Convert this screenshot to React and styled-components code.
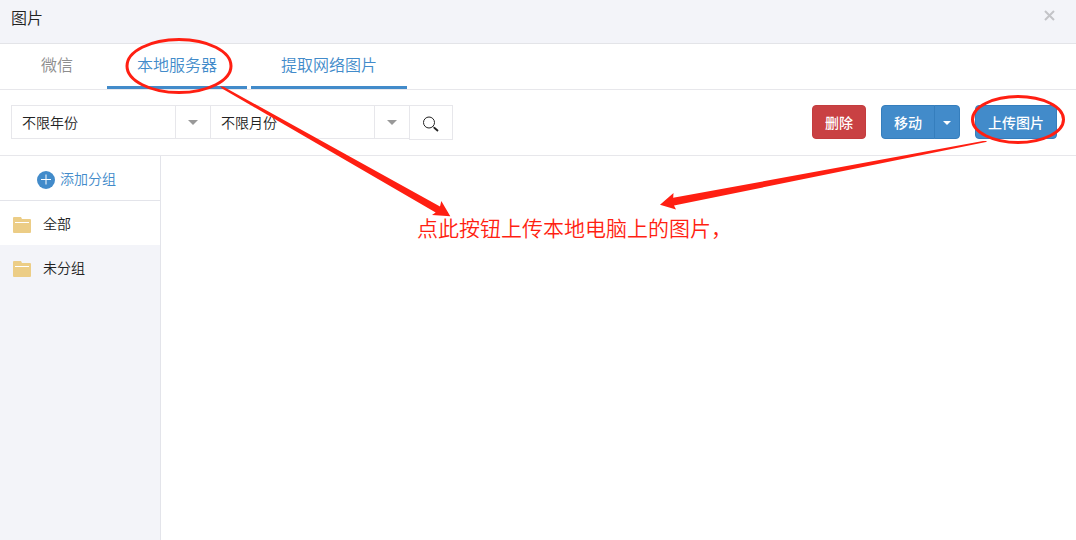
import React from 'react'
import styled, { createGlobalStyle } from 'styled-components'

const groups = [
    { id: 'all', name: '全部', active: true },
    { id: 'none', name: '未分组', active: false },
]

const tabs = [
    { name: '微信', active: false },
    { name: '本地服务器', active: true },
    { name: '提取网络图片', active: true },
]

function Filter({ label, options }) {
    return (
        <SelectBox>
            <select aria-label={label}>
                {options.map((o) => <option key={o}>{o}</option>)}
            </select>
            <span>
                <svg width="10" height="5" viewBox="0 0 10 5"><path d="M0 0h10L5 5z" fill="#999" /></svg>
            </span>
        </SelectBox>
    )
}

function Folder() {
    return (
        <svg width="18" height="16" viewBox="0 0 18 16">
            <path d="M0 1q0-1 1-1h7l1 2h8q1 0 1 1v12q0 1-1 1H1q-1 0-1-1z" fill="#eccd86" />
            <path d="M2 5.5h14" stroke="#fff" strokeWidth="1" />
        </svg>
    )
}

function Notes() {
    return (
        <Overlay>
            <svg width="1076" height="240" viewBox="0 0 1076 240" fill="none">
                <ellipse cx="179" cy="66" rx="52" ry="26.5" stroke="#ff1f12" strokeWidth="3" />
                <ellipse cx="1018" cy="119.5" rx="45.5" ry="23" stroke="#ff1f12" strokeWidth="3" />
                <path d="M220 86L224 87L440 206.5L441.3 201L450.3 216.3L432 215L435.7 212.5L222 88.5z" fill="#ff1f12" />
                <path d="M987 141L986 142L674 205.5L676 209.5L660 204.7L673.5 193L673.2 197.8L983 141z" fill="#ff1f12" />
            </svg>
            <p>点此按钮上传本地电脑上的图片，</p>
        </Overlay>
    )
}

function App() {
    return (
        <Page>
            <GlobalStyle />
            <Header>
                <h1>图片</h1>
                <button type="button" aria-label="关闭">
                    <svg width="11" height="11" viewBox="0 0 11 11"><path d="M1 1l9 9M10 1l-9 9" stroke="#c3c4c8" strokeWidth="2" /></svg>
                </button>
            </Header>
            <Tabs>
                {tabs.map((t) => <Tab key={t.name} href="#" $active={t.active}>{t.name}</Tab>)}
            </Tabs>
            <Toolbar>
                <Filters>
                    <Filter label="年份" options={['不限年份']} />
                    <Filter label="月份" options={['不限月份']} />
                    <Search type="button" aria-label="搜索">
                        <svg width="16" height="16" viewBox="0 0 16 16" fill="none" stroke="#222">
                            <circle cx="6" cy="6.5" r="5.5" />
                            <path d="M10 10.5l1.5 1.5" />
                            <path d="M11 11.5l4 3.5" strokeWidth="1.8" />
                        </svg>
                    </Search>
                </Filters>
                <Actions>
                    <Button type="button" $danger>删除</Button>
                    <Split>
                        <Button type="button">移动</Button>
                        <Button type="button" aria-label="更多">
                            <svg width="8" height="4" viewBox="0 0 8 4"><path d="M0 0h8L4 4z" fill="#fff" /></svg>
                        </Button>
                    </Split>
                    <Button type="button">上传图片</Button>
                </Actions>
            </Toolbar>
            <Body>
                <Sidebar>
                    <AddGroup type="button">
                        <svg width="18" height="18" viewBox="0 0 18 18">
                            <circle cx="9" cy="9" r="9" fill="#428bca" />
                            <path d="M4 8.5h10M9 3.5v10" stroke="#fff" />
                        </svg>
                        添加分组
                    </AddGroup>
                    {groups.map((g) => (
                        <Group key={g.id} href="#" $active={g.active}>
                            <Folder />
                            {g.name}
                        </Group>
                    ))}
                </Sidebar>
                <Content />
            </Body>
            <Notes />
        </Page>
    )
}

const GlobalStyle = createGlobalStyle`
* {
    box-sizing: border-box;
}
body {
    margin: 0;
    color: #222;
    background: #fff;
    font: 350 14px/20px "Noto Sans CJK SC", sans-serif;
}
button, select {
    font: inherit;
    color: inherit;
    margin: 0;
    cursor: pointer;
}
a {
    text-decoration: none;
}
svg {
    display: block;
    flex: none;
}
`
const Page = styled.div`
    position: relative;
    display: flex;
    flex-direction: column;
    min-height: 100vh;
    overflow: hidden;
`
const Header = styled.header`
    display: flex;
    justify-content: space-between;
    align-items: flex-start;
    padding: 7px 21px 16px 11px;
    background: #f3f4f9;
    border-bottom: 1px solid #e3e4e8;
    h1 {
        margin: 0;
        font-size: 16px;
        font-weight: 350;
        line-height: 20px;
    }
    button {
        padding: 3px 0 0;
        border: 0;
        background: none;
    }
`
const Tabs = styled.nav`
    display: flex;
    gap: 4px;
    padding: 0 11px;
    border-bottom: 1px solid #e7e7eb;
`
const Tab = styled.a`
    padding: 10px 30px 12px;
    font-size: 16px;
    line-height: 20px;
    color: ${(p) => (p.$active ? '#428bca' : '#8d8d8d')};
    border-bottom: 3px solid ${(p) => (p.$active ? '#428bca' : 'transparent')};
`
const Toolbar = styled.div`
    display: flex;
    justify-content: space-between;
    padding: 15px 19px 15px 11px;
    border-bottom: 1px solid #e7e7eb;
`
const Filters = styled.div`
    display: flex;
    align-items: flex-start;
`
const SelectBox = styled.div`
    display: grid;
    grid-template-columns: 1fr 35px;
    width: 200px;
    height: 34px;
    margin-right: -1px;
    border: 1px solid #e7e7eb;
    select {
        grid-area: 1 / 1 / 2 / 3;
        padding: 0 45px 0 10px;
        border: 0;
        background: none;
        appearance: none;
    }
    span {
        grid-area: 1 / 2;
        display: grid;
        place-items: center;
        border-left: 1px solid #e7e7eb;
        pointer-events: none;
    }
`
const Search = styled.button`
    display: grid;
    place-items: center;
    width: 44px;
    height: 35px;
    padding: 3px 0 0;
    border: 1px solid #e7e7eb;
    background: #fff;
`
const Actions = styled.div`
    display: flex;
    align-items: flex-start;
    gap: 15px;
`
const Button = styled.button`
    padding: 6px 12px;
    color: #fff;
    font-weight: 500;
    background: ${(p) => (p.$danger ? '#c94143' : '#428bca')};
    border: 1px solid ${(p) => (p.$danger ? '#c43c3e' : '#357ebd')};
    border-radius: 4px;
`
const Split = styled.div`
    display: flex;
    ${Button}:first-child {
        border-radius: 4px 0 0 4px;
    }
    ${Button}:last-child {
        margin-left: -1px;
        padding: 9px 8px 7px;
        border-radius: 0 4px 4px 0;
    }
`
const Body = styled.div`
    display: flex;
    flex: 1;
`
const Sidebar = styled.aside`
    width: 161px;
    background: #f3f4f9;
    border-right: 1px solid #e3e4ea;
    svg {
        margin-top: 3px;
    }
`
const AddGroup = styled.button`
    display: flex;
    align-items: center;
    justify-content: center;
    gap: 5px;
    width: 100%;
    height: 45px;
    padding: 0 7px 0 0;
    color: #428bca;
    background: #fff;
    border: 0;
    border-bottom: 1px solid #e3e4ea;
`
const Group = styled.a`
    display: flex;
    align-items: center;
    gap: 12px;
    padding: 12px 13px;
    color: #222;
    background: ${(p) => (p.$active ? '#fff' : 'transparent')};
`
const Content = styled.main`
    flex: 1;
`
// hand-drawn hints over the dialog
const Overlay = styled.div`
    position: absolute;
    top: 0;
    left: 0;
    pointer-events: none;
    p {
        position: absolute;
        top: 213px;
        left: 417px;
        margin: 0;
        color: #ff1f12;
        font-size: 21px;
        line-height: 28px;
        white-space: nowrap;
    }
`
export default App
